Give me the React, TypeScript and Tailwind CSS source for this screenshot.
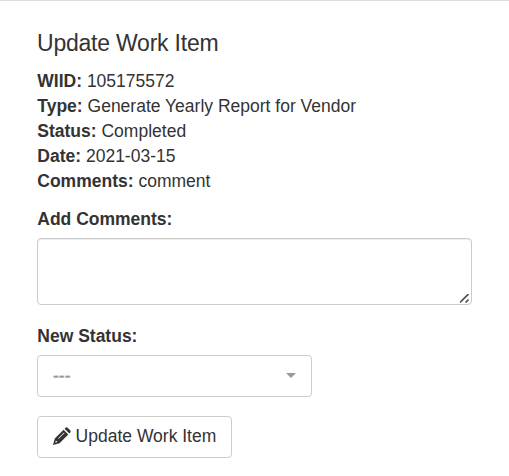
import React from "react";

const details = [
  ["WIID:", "105175572"],
  ["Type:", "Generate Yearly Report for Vendor"],
  ["Status:", "Completed"],
  ["Date:", "2021-03-15"],
  ["Comments:", "comment"],
];

export default function App() {
  return (
    <div className="h-[476px] w-[509px] overflow-hidden rounded-b-[4px] border-t border-[#ddd] bg-white px-[37px] pt-[27px] font-['Liberation_Sans',Arial,sans-serif] text-[17.5px] leading-[25px] text-[#333]">
      <h1 className="text-[23px] leading-[30px] tracking-[-0.22px]">Update Work Item</h1>
      <div className="mt-[11px] pl-[0.3px]">
        {details.map(([k, v]) => (
          <div key={k}>
            <b>{k}</b> {v}
          </div>
        ))}
      </div>
      <label className="mt-[13px] block pl-[0.3px] font-bold" htmlFor="c">Add Comments:</label>
      <div className="relative mt-[6px] h-[67px] w-[435px]">
        <textarea
          id="c"
          className="block h-full w-full resize-none rounded-[4px] border border-[#ccc] shadow-[inset_0_1px_1px_rgba(0,0,0,0.075)]"
        />
        <svg className="pointer-events-none absolute right-[3px] bottom-[2px] h-[9px] w-[9px]" viewBox="0 0 9 9" stroke="#555" strokeWidth="1.7">
          <path d="M0 8.5 8.5 0M5.5 8.5 8.5 5.5" />
        </svg>
      </div>
      <div className="mt-[19px] pl-[0.3px] font-bold">New Status:</div>
      <button className="mt-[6px] flex h-[42px] w-[275px] items-center justify-between rounded-[4px] border border-[#ccc] px-[15px] text-[#999]">
        <span className="[-webkit-text-stroke:0.4px_#999]">---</span>
        <span className="mb-px border-x-[5px] border-t-[5px] border-x-transparent border-t-[#999]" />
      </button>
      <button className="mt-[19px] flex h-[42px] w-[195px] items-center rounded-[4px] border border-[#ccc] pb-[2px] pl-[15px]">
        <svg className="mr-[4.6px] h-[18px] w-[18px]" viewBox="0 0 18 18" fill="#333">
          <path fillRule="evenodd" d="M0 18 1.8 11.5 10.6 2.7 15.3 7.4 6.5 16.2Z M2.9 13.5 2.3 15.7 4.5 15.1Z M5.2 11.3 11 5.5 11.5 6 5.7 11.8Z" />
          <path d="M11.6 1.7 12.8 .6Q13.6 0 14.4.6L17.4 3.6Q18 4.4 17.4 5.2L16.3 6.4Z" />
        </svg>
        Update Work Item
      </button>
    </div>
  );
}
